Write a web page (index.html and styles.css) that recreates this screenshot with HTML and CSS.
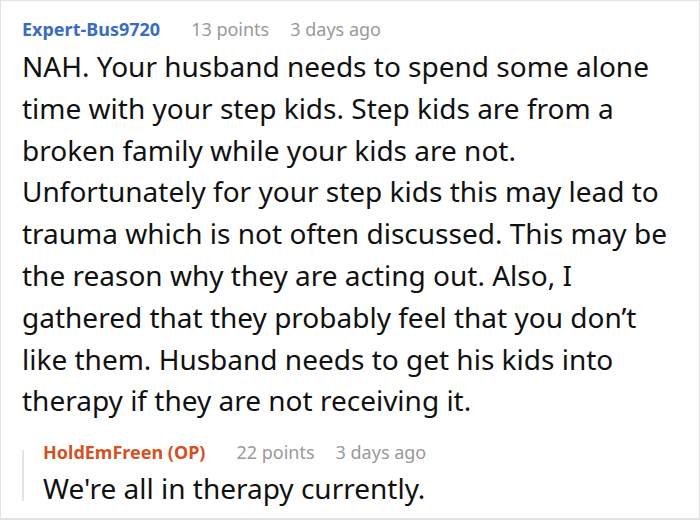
FILE: index.html
```html
<!DOCTYPE html>
<html>
<head>
<meta charset="utf-8">
<link rel="stylesheet" href="styles.css">
</head>
<body>
<div class="frame">
  <div class="meta">
    <span class="author">Expert-Bus9720</span>
    <span class="points">13 points</span>
    <span class="time">3 days ago</span>
  </div>
  <p class="body">NAH. Your husband needs to spend some alone time with your step kids. Step kids are from a broken family while your kids are not. Unfortunately for your step kids this may lead to trauma which is not often discussed. This may be the reason why they are acting out. Also, I gathered that they probably feel that you don’t like them. Husband needs to get his kids into therapy if they are not receiving it.</p>
  <div class="reply">
    <div class="rule"></div>
    <div class="reply-content">
      <div class="meta">
        <span class="author op">HoldEmFreen (OP)</span>
        <span class="points">22 points</span>
        <span class="time">3 days ago</span>
      </div>
      <p class="body">We're all in therapy currently.</p>
    </div>
  </div>
</div>
</body>
</html>
```

FILE: styles.css
```css
html, body {
  margin: 0;
  padding: 0;
  background: #ffffff;
}

.frame {
  box-sizing: border-box;
  width: 700px;
  height: 520px;
  border: 1px solid #e2e2e2;
  border-bottom-width: 2px;
  padding: 16px 20px 0 21px;
  font-family: "Noto Sans", sans-serif;
  color: #111111;
  overflow: hidden;
}

.meta {
  display: flex;
  align-items: baseline;
  font-size: 18px;
  line-height: 24px;
  white-space: nowrap;
}

.author {
  font-weight: 700;
  color: #3b6cbd;
  margin-right: 31px;
}

.author.op {
  color: #d4521f;
}

.points {
  color: #999999;
  margin-right: 21px;
}

.time {
  color: #999999;
}

.body {
  margin: 5px 0 0 0;
  font-size: 28px;
  line-height: 41.8px;
}

.reply {
  display: flex;
  margin-top: 18px;
  margin-left: 0;
}

.rule {
  width: 2px;
  background: #e4e4e4;
  margin: 10px 0 9px 0;
  flex-shrink: 0;
}

.reply-content {
  padding-left: 19px;
}

.reply-content .body {
  margin-top: 4px;
}
```
